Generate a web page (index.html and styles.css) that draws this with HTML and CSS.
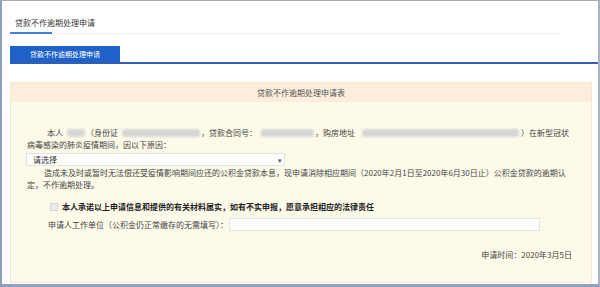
FILE: index.html
```html
<!DOCTYPE html>
<html lang="zh-CN">
<head>
    <meta charset="UTF-8">
    <title>贷款不作逾期处理申请</title>
    <link rel="stylesheet" href="styles.css">
</head>
<body>
    <div class="frame">
        <!-- Page title -->
        <div class="page-head">
            <span class="page-title">贷款不作逾期处理申请</span>
        </div>

        <!-- Tabs -->
        <div class="tabs">
            <div class="tab active">贷款不作逾期处理申请</div>
        </div>

        <!-- Application form -->
        <div class="panel">
            <div class="panel-head">贷款不作逾期处理申请表</div>
            <div class="panel-body">
                <p class="para first">本人<span class="blur w20"></span>（身份证<span class="blur w80"></span>，贷款合同号：<span class="blur w55"></span>，购房地址<span class="blur w160"></span>）在新型冠状病毒感染的肺炎疫情期间，因以下原因：</p>

                <div class="select">
                    <span>请选择</span>
                    <span class="arrow">▾</span>
                </div>

                <p class="para second">造成未及时或暂时无法偿还受疫情影响期间应还的公积金贷款本息，现申请消除相应期间（2020年2月1日至2020年6月30日止）公积金贷款的逾期认<br>定，不作逾期处理。</p>

                <label class="promise">
                    <span class="checkbox"></span>
                    <span>本人承诺以上申请信息和提供的有关材料属实，如有不实申报，愿意承担相应的法律责任</span>
                </label>

                <div class="work-row">
                    <span>申请人工作单位（公积金仍正常缴存的无需填写）：</span>
                    <span class="text-input"></span>
                </div>

                <div class="apply-time">申请时间：2020年3月5日</div>
            </div>
        </div>
    </div>
</body>
</html>
```

FILE: styles.css
```css
/* Global */
body {
    margin: 0;
    font-family: "Noto Sans CJK SC", "Noto Sans", sans-serif;
    color: #444;
    background: #fff;
}

.frame {
    width: 600px;
    height: 287px;
    box-sizing: border-box;
    border-top: 1px solid #a9adb3;
    border-left: 2px solid #8c9fba;
    border-right: 2px solid #a7b4c6;
    border-bottom: 3px solid #8fa2bd;
    overflow: hidden;
}

/* Page title */
.page-head {
    position: relative;
    margin: 0 38px 0 8px;
    height: 32px;
    border-bottom: 1px solid #efefef;
}

.page-title {
    display: block;
    padding: 15px 0 0 5px;
    font-size: 8px;
    line-height: 14px;
    color: #333;
}

.page-head::after {
    content: "";
    position: absolute;
    left: 0;
    bottom: -1px;
    width: 42px;
    height: 2px;
    background: #3f82d8;
}

/* Tabs */
.tabs {
    display: flex;
    margin: 12px 0 0 8px;
    border-bottom: 2px solid #2f5fb5;
}

.tab {
    width: 110px;
    height: 16px;
    line-height: 16px;
    font-size: 7px;
    text-align: center;
    color: #fff;
}

.tab.active {
    background: #1e62c9;
}

/* Panel */
.panel {
    margin: 18px 6px 0 8px;
    height: 201px;
    box-sizing: border-box;
    border: 1px solid #f1e7d4;
    background: #fdfaea;
}

.panel-head {
    height: 19px;
    line-height: 19px;
    text-align: center;
    font-size: 8px;
    color: #555;
    background: #fbeedc;
}

.panel-body {
    padding: 0 19px 0 16px;
    font-size: 8px;
    line-height: 12px;
}

.para {
    margin: 0;
}

.para.first {
    padding-top: 25px;
    text-indent: 20px;
}

.para.second {
    margin-top: 1px;
    text-indent: 17px;
}

.blur {
    display: inline-block;
    height: 8px;
    vertical-align: -1px;
    background: #d6d6d6;
    border-radius: 3px;
    filter: blur(1.2px);
}

.w20 { width: 18px; margin: 0 1px 0 4px; }
.w80 { width: 78px; margin: 0 1px 0 4px; }
.w55 { width: 53px; margin: 0 1px 0 4px; }
.w160 { width: 157px; margin: 0 2px 0 7px; }

/* Select */
.select {
    display: flex;
    justify-content: space-between;
    align-items: center;
    width: 259px;
    height: 13px;
    box-sizing: border-box;
    margin: 2px 0 0 -1px;
    padding: 0 2px 0 6px;
    background: #fff;
    border: 1px solid #e2e2e2;
    color: #333;
}

.select .arrow {
    font-size: 7px;
    color: #555;
}

/* Promise checkbox */
.promise {
    display: flex;
    align-items: center;
    margin: 10px 0 0 23px;
    font-weight: bold;
    color: #222;
}

.checkbox {
    width: 8px;
    height: 8px;
    box-sizing: border-box;
    margin-right: 4px;
    background: #ececec;
    border: 1px solid #d4d4d4;
}

/* Work unit */
.work-row {
    display: flex;
    align-items: center;
    margin: 5px 0 0 21px;
    height: 13px;
}

.text-input {
    width: 311px;
    height: 13px;
    box-sizing: border-box;
    margin-left: 1px;
    background: #fff;
    border: 1px solid #e4e4e4;
}

/* Apply time */
.apply-time {
    margin-top: 18px;
    text-align: right;
    color: #444;
}
```
